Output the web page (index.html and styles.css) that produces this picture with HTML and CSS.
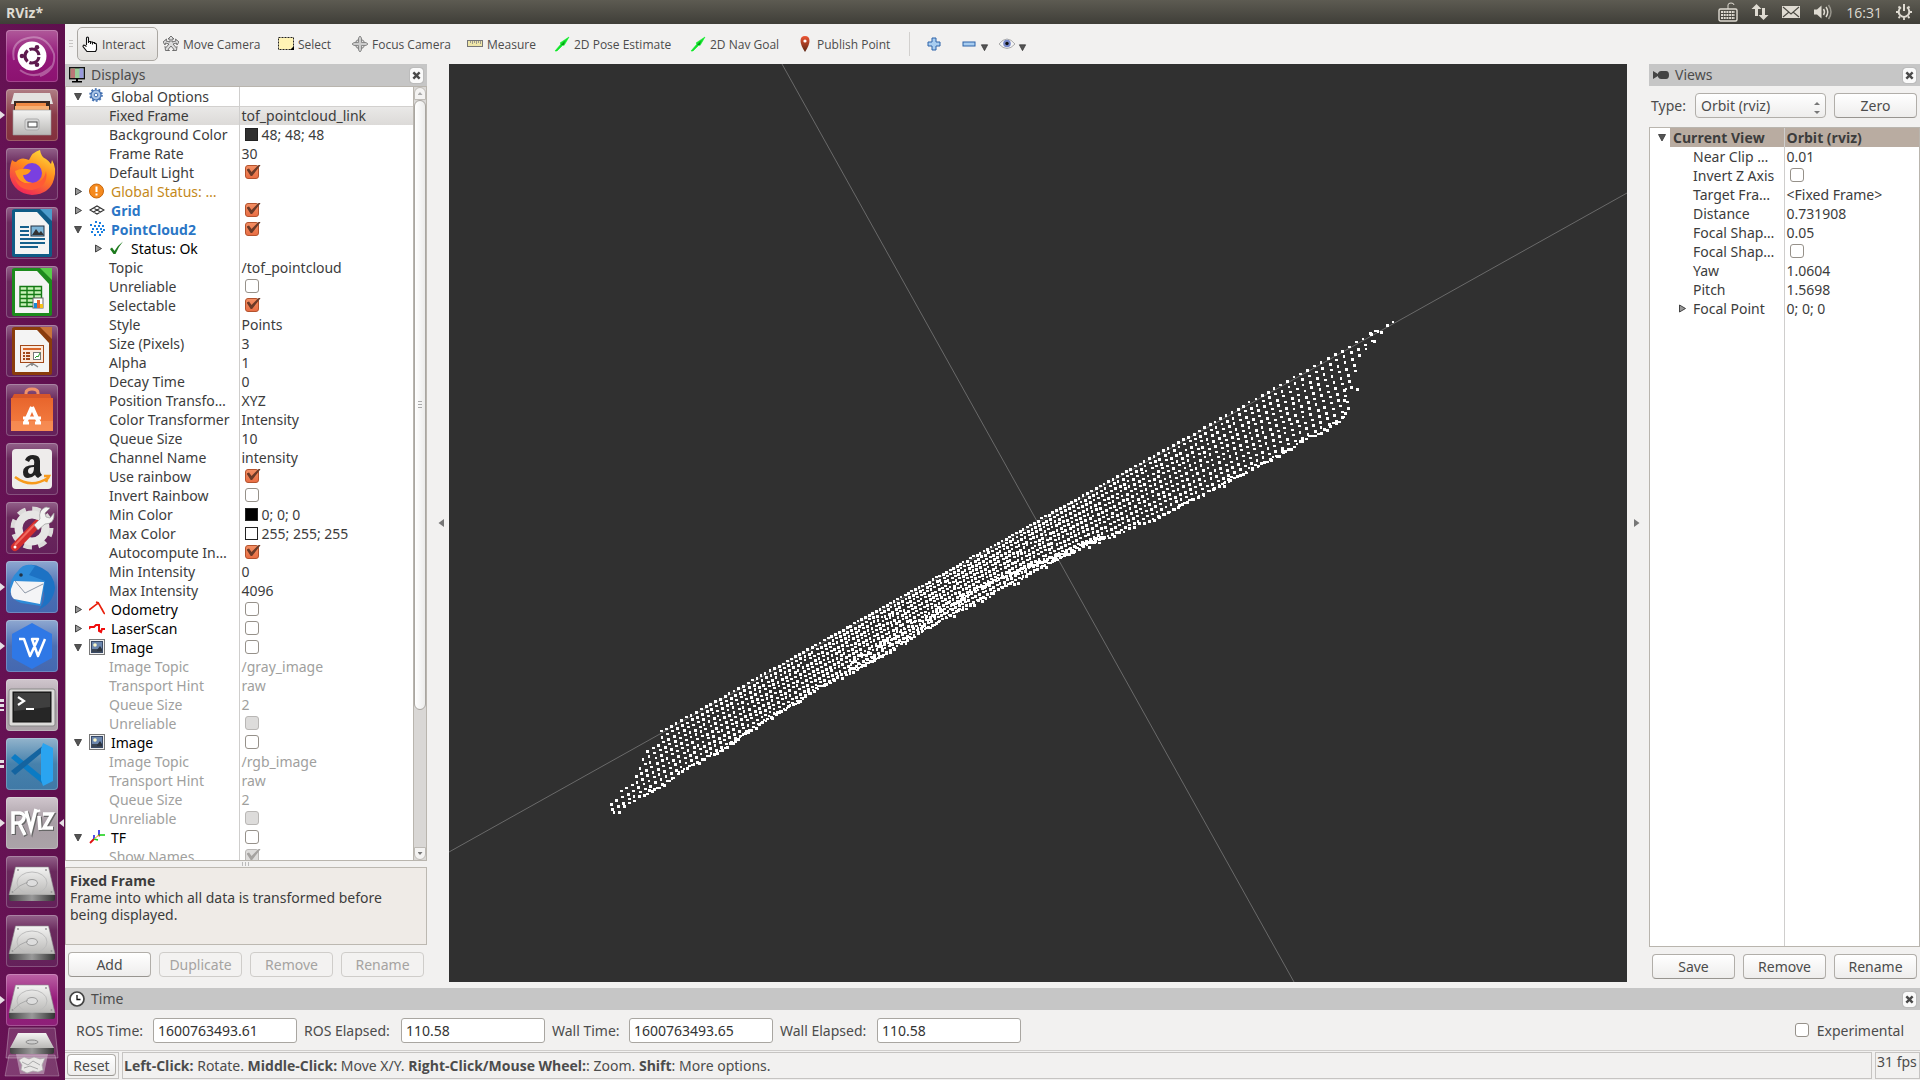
FILE: index.html
```html
<!DOCTYPE html>
<html lang="en">
<head>
<meta charset="utf-8">
<title>RViz*</title>
<link rel="stylesheet" href="styles.css">
</head>
<body>
<svg class="defs" aria-hidden="true">
  <defs>
    <linearGradient id="steel" x1="0" y1="0" x2="0" y2="1"><stop offset="0" stop-color="#f4f4f3"/><stop offset="1" stop-color="#b9b8b6"/></linearGradient>
    <linearGradient id="steelDark" x1="0" y1="0" x2="1" y2="0"><stop offset="0" stop-color="#444"/><stop offset=".5" stop-color="#999"/><stop offset="1" stop-color="#333"/></linearGradient>
    <linearGradient id="fire" x1=".8" y1="0" x2=".3" y2="1"><stop offset="0" stop-color="#ffe13c"/><stop offset=".45" stop-color="#ff8a1e"/><stop offset="1" stop-color="#f0225b"/></linearGradient>
    <linearGradient id="bag" x1="0" y1="0" x2="0" y2="1"><stop offset="0" stop-color="#e8652c"/><stop offset="1" stop-color="#f58044"/></linearGradient>
    <linearGradient id="pin" x1="0" y1="0" x2="0" y2="1"><stop offset="0" stop-color="#ee5533"/><stop offset="1" stop-color="#5a2412"/></linearGradient>
    <symbol id="down" viewBox="0 0 10 10"><path d="M1.500 2h7L5 8.500z" fill="#555" stroke="#333" stroke-width=".8"/></symbol>
    <symbol id="right" viewBox="0 0 10 10"><path d="M2.500 1.500v7L8.500 5z" fill="#999" stroke="#333" stroke-width=".9"/></symbol>
    <symbol id="cross" viewBox="0 0 14 14"><path d="M4.500 4.500l5 5M9.500 4.500l-5 5" stroke="#4a4a4a" stroke-width="2.600" stroke-linecap="square"/></symbol>
    <symbol id="picture" viewBox="0 0 16 16"><rect x=".5" y=".5" width="15" height="15" fill="#eee" stroke="#777"/><rect x="2.500" y="2.500" width="11" height="11" fill="#6b86ad" stroke="#394a66"/><path d="M3 10h10v3H3z" fill="#3a4452"/><path d="M8 11l3-4 2 3v2H8z" fill="#2c3440"/><circle cx="6" cy="6" r="1.800" fill="#fbf7c8"/></symbol>
    <symbol id="drive" viewBox="0 2 52 52"><path d="M9.500 13h33L49 41H3z" fill="url(#steel)" stroke="#8a8a8a" stroke-width=".6"/><path d="M3 41h46v4q0 2-2 2H5q-2 0-2-2z" fill="url(#steelDark)"/><ellipse cx="26" cy="29" rx="15" ry="11" fill="none" stroke="#bdbdbd"/><ellipse cx="26" cy="29" rx="5.500" ry="3.500" fill="#ddd" stroke="#9c9c9c"/><path d="M8 37q5-6 14-9" fill="none" stroke="#aaa"/><circle cx="12" cy="16" r="1" fill="#999"/><circle cx="40" cy="16" r="1" fill="#999"/><circle cx="6.500" cy="38" r="1" fill="#999"/><circle cx="45.500" cy="38" r="1" fill="#999"/></symbol>
    <symbol id="goal" viewBox="0 0 16 16"><path d="M1 15l6-7-1-1 9-6-5 8.500-1-.5-6 6z" fill="#12e02a" stroke="#0ff02a" stroke-width=".6"/><path d="M7 9l4-4-1.500 4z" fill="#0a8a18"/></symbol>
  </defs>
</svg>

<header class="menubar">
  <strong class="app-name">RViz*</strong>
  <div class="indicators">
    <svg width="20" height="20" viewBox="0 0 20 20"><path d="M10 7V3q0-2 3-2t3 2" fill="none" stroke="#dfdbd2"/><rect x="1" y="7" width="18" height="12" rx="1.500" fill="none" stroke="#dfdbd2" stroke-width="1.400"/><path d="M3 10h14M3 13h14M3 16h14" stroke="#dfdbd2" stroke-width="2" stroke-dasharray="2 .7"/></svg>
    <svg width="18" height="18" viewBox="0 0 18 18"><path d="M5.500 1l5 5H7v7H4V6H.500zM12.500 17l-5-5H11V5h3v7h3.500z" fill="#dfdbd2"/></svg>
    <svg width="18" height="18" viewBox="0 0 18 18"><rect y="3" width="18" height="12" fill="#dfdbd2"/><path d="M1 4l8 7 8-7M1 14l6-5M17 14l-6-5" fill="none" stroke="#4a4942" stroke-width="1.100"/></svg>
    <svg width="20" height="18" viewBox="0 0 20 18"><path d="M1 6.500h3l4.500-4v13L4 11.500H1z" fill="#dfdbd2"/><path d="M10.500 6q2 3 0 6M13 4q3.500 5 0 10" fill="none" stroke="#dfdbd2" stroke-width="1.500"/><path d="M15.500 2q5 7 0 14" fill="none" stroke="#97958c" stroke-width="1.500"/></svg>
    <time>16:31</time>
    <svg width="18" height="18" viewBox="0 0 18 18"><path d="M6 4.300a5.300 5.300 0 1 0 6 0" fill="none" stroke="#dfdbd2" stroke-width="2"/><path d="M9 1v7" stroke="#dfdbd2" stroke-width="2"/><path d="M3.500 3.500l1.500 1.500M14.500 3.500L13 5M1 9h2.500M14.500 9H17M3.500 15l1.500-1.500M14.500 15L13 13.500M9 14.500V17" stroke="#dfdbd2" stroke-width="1.800"/></svg>
  </div>
</header>

<div class="desktop">
  <nav class="launcher" aria-label="Launcher">
    <button class="tile dash" aria-label="Search"><svg viewBox="0 0 52 52"><path d="M8 30Q4 12 22 8t26 16q2 16-14 22M14 40q16 12 32-4" fill="none" stroke="#fff" stroke-opacity=".3" stroke-width="2"/><circle cx="26" cy="26" r="14.500" fill="#fff"/><circle cx="26" cy="26" r="7" fill="none" stroke="#5e1a4e" stroke-width="3.200" stroke-dasharray="12.600 2" stroke-dashoffset="-1"/><circle cx="16" cy="26" r="2.300" fill="#5e1a4e"/><circle cx="31" cy="17.300" r="2.300" fill="#5e1a4e"/><circle cx="31" cy="34.700" r="2.300" fill="#5e1a4e"/></svg></button>
    <button class="tile files on" aria-label="Files"><svg viewBox="0 0 52 52"><path d="M8 4h36l3 11H5z" fill="#e3e2e1"/><path d="M8 12h36v10H8z" fill="#3c2a22"/><path d="M10 14h30v3H10z" fill="#ef8a45"/><path d="M9 17h34v5H9z" fill="#f7b074"/><path d="M7 21h38v25H7z" fill="url(#steel)" stroke="#999" stroke-width=".6"/><rect x="19" y="30" width="14" height="11" rx="2" fill="#d8d8d8" stroke="#aaa"/><rect x="22" y="33" width="9" height="5" fill="#fff" stroke="#444"/></svg></button>
    <button class="tile" aria-label="Firefox"><svg viewBox="0 0 52 52"><path d="M6 12q2 2 4 2 5-6 13-2 3-8 11-10 1 7 6 9 3 2 5 5l1-4q5 8 2 19Q44 46 26 47 8 45 4 29 3 20 6 12z" fill="url(#fire)"/><circle cx="26" cy="25" r="10" fill="#7a3fe0"/><path d="M9 23q8-4 16-1-2 5-8 5 1 7 10 8-14 3-18-12z" fill="#ff9a1f"/><path d="M27 35q11 0 13-12 3 16-14 19-14 0-17-12 6 7 18 5z" fill="#ff5a35"/></svg></button>
    <button class="tile" aria-label="Writer"><svg viewBox="0 0 52 52"><path d="M9 2h26l11 12v34q0 2-2 2H8q-2 0-2-2V4q0-2 3-2z" fill="#0f5b86"/><path d="M34 2h12v12z" fill="#4b9ccb"/><path d="M9 5h22l12 13v29H9z" fill="#f4f4f4"/><path d="M14 20h9M14 24h9M14 28h9M14 32h25M14 36h25M14 40h18" stroke="#15608c" stroke-width="2"/><rect x="25" y="19" width="13" height="10" fill="#7db5d8" stroke="#234"/><path d="M26 28l4-6 3 4 2-2 3 4z" fill="#333"/></svg></button>
    <button class="tile" aria-label="Calc"><svg viewBox="0 0 52 52"><path d="M9 2h26l11 12v34q0 2-2 2H8q-2 0-2-2V4q0-2 3-2z" fill="#1c8a1c"/><path d="M34 2h12v12z" fill="#58cc4a"/><path d="M9 5h22l12 13v29H9z" fill="#f4f4f4"/><path d="M14 20.500h21.500v20H14z" fill="#c8f2b8" stroke="#157a15" stroke-width="1.400"/><path d="M14 24.500h21M14 28.500h21M14 32.500h21M14 36.500h21M21 20v20M28 20v20" stroke="#157a15" stroke-width="1.400"/><rect x="27" y="32" width="10" height="10" fill="#fff" stroke="#666"/><path d="M28 37h3v5h-3z" fill="#1a8ad8"/><path d="M31 34h3v8h-3z" fill="#e8672a"/><path d="M34 38h3v4h-3z" fill="#f5c21a"/></svg></button>
    <button class="tile" aria-label="Impress"><svg viewBox="0 0 52 52"><path d="M9 2h26l11 12v34q0 2-2 2H8q-2 0-2-2V4q0-2 3-2z" fill="#8a3c0c"/><path d="M34 2h12v12z" fill="#c9753a"/><path d="M9 5h22l12 13v29H9z" fill="#f4f4f4"/><rect x="14.500" y="20.500" width="23" height="17" fill="#fbe9dc" stroke="#a3491a"/><path d="M17 24h18" stroke="#d9662a" stroke-width="2"/><path d="M17 28h7M17 31h7M17 34h7" stroke="#a3491a" stroke-width="2" stroke-dasharray="2 1 6"/><rect x="27.500" y="27.500" width="7" height="7" fill="#fff" stroke="#777"/><path d="M29 33l2-2 1 1 2-4" stroke="#2a9a2a" fill="none"/><path d="M26 38l-6 4M26 38l6 4M26 38v3" stroke="#888" stroke-width="1.500"/></svg></button>
    <button class="tile" aria-label="Software"><svg viewBox="0 0 52 52"><path d="M20 14V9q0-4 6-4t6 4v5" fill="none" stroke="#f0926a" stroke-width="3"/><path d="M8 10h36l2 6H5z" fill="#d6562a"/><path d="M5 14h42v33H5z" fill="url(#bag)"/><path d="M5 37h42v10H5z" fill="#fa9a63" opacity=".5"/><path d="M26 23l-7 16M26 23l7 16" stroke="#fff" stroke-width="4"/><path d="M17 34h18M17 39h6M29 39h6" stroke="#fff" stroke-width="3"/></svg></button>
    <button class="tile" aria-label="Amazon"><svg viewBox="0 0 52 52"><rect x="6" y="6" width="40" height="40" rx="4" fill="#eeeceb"/><path d="M19 17q2-5 8-5 7 0 7 6v10q0 2 2 4l-4 3q-2-1-3-3-3 3-7 3-5 0-5-6 0-7 11-7 1-6-2-6-2 0-3 3zM28 24q-6 0-6 4 0 3 3 3 3-1 3-7z" fill="#222"/><path d="M9 34q16 12 33 1l1-2-5 0M42 34l-2 5" fill="none" stroke="#f79a1c" stroke-width="2.600"/></svg></button>
    <button class="tile" aria-label="System Settings"><svg viewBox="0 0 52 52"><circle cx="26" cy="26" r="17" fill="none" stroke="#dcdbda" stroke-width="9" stroke-dasharray="7.500 5.800"/><circle cx="26" cy="26" r="13.500" fill="none" stroke="#e6e5e4" stroke-width="8"/><path d="M9 45l22-23" stroke="#d42e2e" stroke-width="8" stroke-linecap="round"/><path d="M9 43l20-21" stroke="#f06a5f" stroke-width="2"/><path d="M28 23l6-6q-2-9 6-12l4 1-5 5 1 4 4 1 4-5q1 11-9 11l-7 6z" fill="#f3f3f2" stroke="#999" stroke-width=".7"/><circle cx="9" cy="45" r="1.500" fill="#fff"/></svg></button>
    <button class="tile blue on" aria-label="Thunderbird"><svg viewBox="0 0 52 52"><path d="M10 14Q20-2 36 7q12 6 13 20-2 16-17 22 8-7 6-18L14 18z" fill="#1d72c4"/><path d="M4 30Q3 18 12 10q6-9 17-5l-6 9 16 6-4 25-20-3q-9-3-11-12z" fill="#2e8bd8"/><path d="M8 20l30 1-4 22-26-5q-4-3-3-10z" fill="#f4f4f6"/><path d="M9 20l10 12 18-9" fill="none" stroke="#8e98a8"/><circle cx="15" cy="14" r="1.800" fill="#234"/></svg></button>
    <button class="tile blue on" aria-label="WPS Writer"><svg viewBox="0 0 52 52"><path d="M26 3l20 11v24L26 49 6 38V14z" fill="#2f78e6"/><path d="M13 19h5l6 17 8-17h-6l6 17 7-17" fill="none" stroke="#fff" stroke-width="2.500" stroke-linejoin="round"/></svg></button>
    <button class="tile silver on3" aria-label="Terminal"><svg viewBox="0 0 52 52"><rect x="3" y="10" width="46" height="37" rx="2" fill="#dcdbd9" stroke="#888"/><rect x="7" y="13" width="38" height="30" fill="#262626" stroke="#111"/><path d="M8 14h36v14L8 32z" fill="#3f3f3f"/><path d="M12 18l6 4-6 4" fill="none" stroke="#fff" stroke-width="2.200"/><path d="M20 30h8" stroke="#fff" stroke-width="2"/></svg></button>
    <button class="tile sky on2" aria-label="Visual Studio Code"><svg viewBox="0 0 52 52"><path d="M5 20l4-4 29 24v7z" fill="#0b7bc4"/><path d="M5 33l4 4 30-25V6z" fill="#1464a0"/><path d="M37 5l10 5v33l-10 5-2-6V11z" fill="#2aa4f0"/></svg></button>
    <button class="tile silver on active" aria-label="RViz"><svg viewBox="0 0 52 52"><path d="M7 37V16h7q5 1 4 5t-5 5l6 12M7 26h6M20 14l5 18 5-20M33 19l1 14M37 17h9L38 31h9" fill="none" stroke="#666" stroke-width="4" transform="translate(1 1)"/><path d="M7 37V16h7q5 1 4 5t-5 5l6 12M7 26h6M20 14l5 18 5-20M33 19l1 14M37 17h9L38 31h9M32 13l1 2" fill="none" stroke="#fff" stroke-width="3.500"/></svg></button>
    <button class="tile" aria-label="Drive"><svg><use href="#drive"/></svg></button>
    <button class="tile" aria-label="Drive"><svg><use href="#drive"/></svg></button>
    <button class="tile magenta on" aria-label="Drive"><svg><use href="#drive"/></svg></button>
    <button class="folded" aria-label="Trash"><svg width="56" height="50" viewBox="0 0 56 50"><path d="M5 1h46l3 30H2z" fill="#fff" fill-opacity=".15" stroke="#fff" stroke-opacity=".3"/><path d="M14 6h28l8 15H6z" fill="url(#steel)"/><path d="M6 21h44v4q0 2-2 2H8q-2 0-2-2z" fill="url(#steelDark)"/><ellipse cx="28" cy="15" rx="6" ry="2" fill="#ccc" stroke="#888"/><path d="M5 28h46l4 21H1z" fill="#fff" fill-opacity=".18" stroke="#fff" stroke-opacity=".25"/><path d="M12 27h32l-4 20H16z" fill="#e0d5de" fill-opacity=".45"/><path d="M15 33l5-3 5 2 5-2 6 2 5-1-3 7 1 5-5 2-5-1-6 2-6-3 1-5z" fill="#e9e7e6" stroke="#aaa" stroke-width=".7"/><path d="M18 35l6 3 5-4 7 4M20 41l6-2 8 3" fill="none" stroke="#aaa"/></svg></button>
  </nav>

  <div class="window">
    <div class="toolbar" role="toolbar">
      <span class="grip"></span>
      <button class="tool w-interact pressed"><svg viewBox="0 0 16 16"><path d="M4.500 9V2q0-1 1-1t1 1v5V5.500h2V8 6h2v2.500V6.500h2V8q0-1 1.500-.5.500.500.500 2v4l-1 2H5l-4-5q0-2 2-1l1.500 1" fill="#fff" stroke="#111" stroke-width="1.100"/></svg>Interact</button>
      <button class="tool w-move"><svg viewBox="0 0 16 16"><path d="M8 0l3 3-2 0v3l4-1-.5-2L16 6l-2 3-.5-2L10 8l3 3.500 1-1-.5 4-4 0 1.500-1L8 10l-3 3.500L6.500 14.500l-4 0L2 10.500l1 1L6 8 2.500 7 2 9 0 6l3.500-3L3 5l4 1V3L5 3z" fill="#ddd" stroke="#555" stroke-width=".8"/></svg>Move Camera</button>
      <button class="tool w-select"><svg viewBox="0 0 16 16"><rect x=".5" y="1.500" width="15" height="12" fill="#fff3b5" stroke="#222" stroke-dasharray="2 1"/><path d="M12 14h4v-4z"/></svg>Select</button>
      <button class="tool w-move"><svg viewBox="0 0 16 16"><circle cx="8" cy="8" r="4.500" fill="none" stroke="#999" stroke-width="1.500"/><path d="M8 0l1.500 2v4.500H14L16 8l-2 1.500H9.500V14L8 16l-1.500-2V9.500H2L0 8l2-1.500h4.500V2z" fill="#ccc" stroke="#777" stroke-width=".8"/></svg>Focus Camera</button>
      <button class="tool w-measure"><svg viewBox="0 0 16 16"><rect x=".5" y="4.500" width="15" height="6" fill="#efe6a8" stroke="#777"/><path d="M3.500 5v2M5.500 5v3M7.500 5v2M9.500 5v3M11.500 5v2M13.500 5v3" stroke="#888" stroke-width=".8"/></svg>Measure</button>
      <button class="tool w-pose"><svg><use href="#goal"/></svg>2D Pose Estimate</button>
      <button class="tool w-nav"><svg><use href="#goal"/></svg>2D Nav Goal</button>
      <button class="tool w-publish"><svg viewBox="0 0 16 16"><path d="M8 0q4.500 0 4.500 5 0 4-4.500 11Q3.500 9 3.500 5 3.500 0 8 0z" fill="url(#pin)"/><circle cx="8" cy="5" r="1.600" fill="#fff"/></svg>Publish Point</button>
      <span class="sep"></span>
      <button class="tool mini" aria-label="Add tool"><svg viewBox="0 0 16 16"><path d="M6 2h4v4h4v4h-4v4H6v-4H2V6h4z" fill="#a8cdf0" stroke="#2d62a8"/></svg></button>
      <button class="tool mini" aria-label="Remove tool"><svg viewBox="0 0 16 16"><rect x="2" y="6" width="12" height="4" fill="#a8cdf0" stroke="#2d62a8"/></svg><svg class="caret"><use href="#down"/></svg></button>
      <button class="tool mini" aria-label="View options"><svg viewBox="0 0 16 16"><path d="M0 8q8-10 16 0-8 9-16 0z" fill="#f4f4f4" stroke="#aaa"/><circle cx="8" cy="7.500" r="3.800" fill="#7788c8"/><circle cx="8" cy="7.500" r="1.700" fill="#111"/></svg><svg class="caret"><use href="#down"/></svg></button>
    </div>

    <div class="docks">
      <section class="displays">
        <h2 class="dock-title"><svg viewBox="0 0 16 16"><rect x=".7" y=".7" width="14.600" height="11" fill="#9c9" stroke="#111" stroke-width="1.400"/><path d="M1.500 1.500H6V11H1.500z" fill="#b77"/><path d="M10.500 1.500h4V11h-4z" fill="#99d"/><path d="M7 12h2v2h4v1.500H3V14h4z"/></svg>Displays<button class="close" aria-label="Close"><svg><use href="#cross"/></svg></button></h2>
        <div class="tree-box">
          <div class="tree-clip">
          <table class="tree">
            <colgroup><col class="name-col"><col></colgroup>
            <tbody>
            <tr class="top"><td><i class="tw"><svg><use href="#down"/></svg></i><svg class="ico" viewBox="0 0 16 16"><circle cx="7" cy="7" r="5" fill="#a9c4e6" stroke="#3f6eb0" stroke-width="1.200"/><circle cx="7" cy="7" r="6" fill="none" stroke="#3f6eb0" stroke-width="1.600" stroke-dasharray="1.900 1.870"/><circle cx="7" cy="7" r="1.800" fill="#fff" stroke="#3f6eb0"/></svg>Global Options</td><td></td></tr>
            <tr class="picked"><td>Fixed Frame</td><td>tof_pointcloud_link</td></tr>
            <tr><td>Background Color</td><td><i class="swatch dark"></i>48; 48; 48</td></tr>
            <tr><td>Frame Rate</td><td>30</td></tr>
            <tr><td>Default Light</td><td><input type="checkbox" aria-label="Default Light" checked></td></tr>
            <tr class="top warn"><td><i class="tw"><svg><use href="#right"/></svg></i><svg class="ico" viewBox="0 0 16 16"><circle cx="7.500" cy="8" r="7" fill="#f58a1e" stroke="#c8660a"/><path d="M7.500 3.500V9M7.500 10.500v2" stroke="#fff" stroke-width="2"/></svg>Global Status: …</td><td></td></tr>
            <tr class="top live"><td><i class="tw"><svg><use href="#right"/></svg></i><svg class="ico" viewBox="0 0 16 16"><path d="M1 8l7-4 7 4-7 4zM4.500 6l7 4M11.500 6l-7 4" fill="none" stroke="#333" stroke-width="1.100"/></svg>Grid</td><td><input type="checkbox" aria-label="Grid" checked></td></tr>
            <tr class="top live"><td><i class="tw"><svg><use href="#down"/></svg></i><svg class="ico" viewBox="0 0 16 16"><path d="M6 1h2M10 2h2M1 4h2M5 5h2M9 5h2M13 5h2M3 8h2M7 8h2M11 8h2M2 11h2M8 11h2M12 11h2M14 9h2M5 14h2M10 14h2" stroke="#1a7fe0" stroke-width="1.800"/></svg>PointCloud2</td><td><input type="checkbox" aria-label="PointCloud2" checked></td></tr>
            <tr class="sub"><td><i class="tw"><svg><use href="#right"/></svg></i><svg class="ico" viewBox="0 0 16 16"><path d="M1 9l2-1.500L5.500 11Q9 5 14 1.500q-4.500 5-7.500 12.500H4.500z" fill="#1d7a1d"/></svg>Status: Ok</td><td></td></tr>
            <tr><td>Topic</td><td>/tof_pointcloud</td></tr>
            <tr><td>Unreliable</td><td><input type="checkbox" aria-label="Unreliable"></td></tr>
            <tr><td>Selectable</td><td><input type="checkbox" aria-label="Selectable" checked></td></tr>
            <tr><td>Style</td><td>Points</td></tr>
            <tr><td>Size (Pixels)</td><td>3</td></tr>
            <tr><td>Alpha</td><td>1</td></tr>
            <tr><td>Decay Time</td><td>0</td></tr>
            <tr><td>Position Transfo…</td><td>XYZ</td></tr>
            <tr><td>Color Transformer</td><td>Intensity</td></tr>
            <tr><td>Queue Size</td><td>10</td></tr>
            <tr><td>Channel Name</td><td>intensity</td></tr>
            <tr><td>Use rainbow</td><td><input type="checkbox" aria-label="Use rainbow" checked></td></tr>
            <tr><td>Invert Rainbow</td><td><input type="checkbox" aria-label="Invert Rainbow"></td></tr>
            <tr><td>Min Color</td><td><i class="swatch black"></i>0; 0; 0</td></tr>
            <tr><td>Max Color</td><td><i class="swatch"></i>255; 255; 255</td></tr>
            <tr><td>Autocompute In…</td><td><input type="checkbox" aria-label="Autocompute Intensity Bounds" checked></td></tr>
            <tr><td>Min Intensity</td><td>0</td></tr>
            <tr><td>Max Intensity</td><td>4096</td></tr>
            <tr class="top off"><td><i class="tw"><svg><use href="#right"/></svg></i><svg class="ico" viewBox="0 0 16 16"><path d="M0 9l8-6 1-1 1 1 5 9M7 1l3 1M13 8l2 4 1 1" fill="none" stroke="#e8200c" stroke-width="1.600"/></svg>Odometry</td><td><input type="checkbox" aria-label="Odometry"></td></tr>
            <tr class="top off"><td><i class="tw"><svg><use href="#right"/></svg></i><svg class="ico" viewBox="0 0 16 16"><path d="M0 9l1-2h4l2-2h3v6l2 1 1-3h3" fill="none" stroke="#f00c0c" stroke-width="2"/></svg>LaserScan</td><td><input type="checkbox" aria-label="LaserScan"></td></tr>
            <tr class="top off"><td><i class="tw"><svg><use href="#down"/></svg></i><svg class="ico"><use href="#picture"/></svg>Image</td><td><input type="checkbox" aria-label="Image"></td></tr>
            <tr class="dim"><td>Image Topic</td><td>/gray_image</td></tr>
            <tr class="dim"><td>Transport Hint</td><td>raw</td></tr>
            <tr class="dim"><td>Queue Size</td><td>2</td></tr>
            <tr class="dim"><td>Unreliable</td><td><input type="checkbox" aria-label="Unreliable" disabled></td></tr>
            <tr class="top off"><td><i class="tw"><svg><use href="#down"/></svg></i><svg class="ico"><use href="#picture"/></svg>Image</td><td><input type="checkbox" aria-label="Image"></td></tr>
            <tr class="dim"><td>Image Topic</td><td>/rgb_image</td></tr>
            <tr class="dim"><td>Transport Hint</td><td>raw</td></tr>
            <tr class="dim"><td>Queue Size</td><td>2</td></tr>
            <tr class="dim"><td>Unreliable</td><td><input type="checkbox" aria-label="Unreliable" disabled></td></tr>
            <tr class="top off"><td><i class="tw"><svg><use href="#down"/></svg></i><svg class="ico" viewBox="0 0 16 16"><path d="M1 14l4-4M9 6l2 1" stroke="#e01010" stroke-width="1.800"/><path d="M5 10V6M10 6V1" stroke="#1515e0" stroke-width="1.500"/><path d="M5 10l4 1M10 6h6" stroke="#10d010" stroke-width="1.500"/><path d="M5 10l5-4" stroke="#d8a020"/></svg>TF</td><td><input type="checkbox" aria-label="TF"></td></tr>
            <tr class="dim"><td>Show Names</td><td><input type="checkbox" aria-label="Show Names" checked disabled></td></tr>
            </tbody>
          </table>
          </div>
          <div class="scroll"><span class="step up"></span><span class="thumb"></span><span class="rest"></span><span class="step dn"></span></div>
        </div>
        <div class="vsplit"><span></span></div>
        <div class="help"><b>Fixed Frame</b><p>Frame into which all data is transformed before being displayed.</p></div>
        <div class="actions"><button class="btn">Add</button><button class="btn" disabled>Duplicate</button><button class="btn" disabled>Remove</button><button class="btn" disabled>Rename</button></div>
      </section>

      <button class="fold fold-left" aria-label="Hide left panel"><svg viewBox="0 0 10 10"><path d="M8 1v8L2.500 5z" fill="#777"/></svg></button>
      <main class="view">
        <svg viewBox="0 0 1178 918" preserveAspectRatio="xMidYMid slice" role="img" aria-label="Point cloud">
          <path class="axis" d="M0 788L1178 129M333 0L845 918"/>
          <path id="cloud" class="points"/>
        </svg>
      </main>
      <button class="fold" aria-label="Hide right panel"><svg viewBox="0 0 10 10"><path d="M1 1v8l5.500-4z" fill="#777"/></svg></button>

      <section class="views">
        <h2 class="dock-title"><svg viewBox="0 0 16 16"><path d="M0 4l5 3V6q1-2 3-2h5q3 0 3 4t-3 4H8q-2 0-3-2V9l-5 3z" fill="#444"/></svg>Views<button class="close" aria-label="Close"><svg><use href="#cross"/></svg></button></h2>
        <div class="type-row"><label for="type">Type:</label><div class="combo"><select id="type"><option>Orbit (rviz)</option></select></div><button class="btn">Zero</button></div>
        <div class="tree-box view-tree">
          <table class="tree">
            <colgroup><col class="name-col"><col></colgroup>
            <tbody>
            <tr class="head"><td><i class="tw"><svg><use href="#down"/></svg></i>Current View</td><td>Orbit (rviz)</td></tr>
            <tr><td>Near Clip …</td><td>0.01</td></tr>
            <tr><td>Invert Z Axis</td><td><input type="checkbox" aria-label="Invert Z Axis"></td></tr>
            <tr><td>Target Fra…</td><td>&lt;Fixed Frame&gt;</td></tr>
            <tr><td>Distance</td><td>0.731908</td></tr>
            <tr><td>Focal Shap…</td><td>0.05</td></tr>
            <tr><td>Focal Shap…</td><td><input type="checkbox" aria-label="Focal Shape Fixed Size"></td></tr>
            <tr><td>Yaw</td><td>1.0604</td></tr>
            <tr><td>Pitch</td><td>1.5698</td></tr>
            <tr class="sub"><td><i class="tw"><svg><use href="#right"/></svg></i>Focal Point</td><td>0; 0; 0</td></tr>
            <tr class="fill"><td></td><td></td></tr>
            </tbody>
          </table>
        </div>
        <div class="actions"><button class="btn">Save</button><button class="btn">Remove</button><button class="btn">Rename</button></div>
      </section>
    </div>

    <section class="time">
      <h2 class="dock-title"><svg viewBox="0 0 16 16"><circle cx="8" cy="8" r="7" fill="#fff" stroke="#444" stroke-width="1.700"/><path d="M8 4v4.500h3.500" fill="none" stroke="#111" stroke-width="1.300"/></svg>Time<button class="close" aria-label="Close"><svg><use href="#cross"/></svg></button></h2>
      <div class="time-row">
        <label class="short" for="rt">ROS Time:</label><input id="rt" type="text" value="1600763493.61">
        <label class="long" for="re">ROS Elapsed:</label><input id="re" type="text" value="110.58">
        <label class="short" for="wt">Wall Time:</label><input id="wt" type="text" value="1600763493.65">
        <label class="long" for="we">Wall Elapsed:</label><input id="we" type="text" value="110.58">
        <label class="experimental"><input type="checkbox">Experimental</label>
      </div>
    </section>
    <footer class="status">
      <div class="cell"><button class="btn reset">Reset</button></div>
      <div class="cell hint"><p><b>Left-Click:</b> Rotate. <b>Middle-Click:</b> Move X/Y. <b>Right-Click/Mouse Wheel:</b>: Zoom. <b>Shift</b>: More options.</p></div>
      <div class="cell fps">31 fps</div>
    </footer>
  </div>
</div>
<script src="cloud.js"></script>
</body>
</html>
```
FILE: styles.css
```css
* { box-sizing: border-box; }
body {
  margin: 0;
  height: 100vh;
  display: flex;
  flex-direction: column;
  overflow: hidden;
  background: #f2f1f0;
  color: #4c4c4c;
  font: 14px/19px "Noto Sans", "Open Sans", sans-serif;
}
button, input, select { font: inherit; color: inherit; }
button { padding: 0; border: 0; background: none; }
h2, p { margin: 0; font-size: 14px; font-weight: 400; }
.defs { position: absolute; width: 0; height: 0; }

/* top bar */
.menubar {
  flex: 0 0 24px;
  display: flex;
  align-items: center;
  justify-content: space-between;
  padding: 0 7px 0 6px;
  color: #dfdbd2;
  background: linear-gradient(#5d5b52, #3f3e38);
  font-family: "Open Sans", sans-serif;
}
.indicators { display: flex; align-items: center; gap: 13px; }
.indicators svg { display: block; }

.desktop { flex: 1; min-height: 0; display: flex; }

/* launcher */
.launcher {
  flex: 0 0 65px;
  display: flex;
  flex-direction: column;
  align-items: center;
  gap: 7px;
  padding: 6px 1px 0 0;
  overflow: hidden;
  background: linear-gradient(90deg, #661254, #5e0f4d);
}
.tile {
  position: relative;
  flex: 0 0 52px;
  width: 52px;
  border-radius: 4px;
  background: linear-gradient(#93628a, #6a2a5d 30%, #64205a);
  box-shadow: inset 0 0 0 1px #ffffff38;
}
.tile svg { display: block; width: 52px; height: 52px; }
.dash { background: linear-gradient(#b05a9a, #93187a 50%, #8c1270); }
.files { background: linear-gradient(#b07f86, #8a3a48 50%, #83303c); }
.blue { background: linear-gradient(#8fa8d0, #4c6fb4 50%, #4468b0); }
.sky { background: linear-gradient(#93b4cc, #4681ac 50%, #4079a6); }
.silver { background: linear-gradient(#d0c6cd, #a79da4 50%, #aba3a8); }
.magenta { background: linear-gradient(#bb62a4, #94197a 50%, #8e2078); }
.on::before, .active::after {
  content: "";
  position: absolute;
  left: -6px;
  top: 22px;
  width: 5px;
  height: 8px;
  background: #e6dfe4;
  clip-path: polygon(0 0, 100% 50%, 0 100%);
}
.active::after { left: 53px; clip-path: polygon(100% 0, 0 50%, 100% 100%); }
.on3::before, .on2::before {
  content: "";
  position: absolute;
  left: -6px;
  top: 20px;
  width: 4px;
  height: 12px;
  background: repeating-linear-gradient(#e6dfe4 0 3px, transparent 3px 5px);
}
.on2::before { top: 22px; height: 8px; }
.folded { flex: 0 0 50px; margin-top: -6px; }
.folded svg { display: block; }

/* window */
.window { flex: 1; min-width: 0; display: flex; flex-direction: column; }
.toolbar {
  flex: 0 0 40px;
  display: flex;
  align-items: center;
  padding: 0 4px;
  font-family: "Open Sans", sans-serif;
  font-size: 12px;
}
.grip {
  width: 4px;
  height: 8px;
  margin-right: 4px;
  background: repeating-linear-gradient(#c8c6c4 0 1px, transparent 1px 3px);
}
.tool { display: flex; align-items: center; gap: 4px; height: 34px; padding: 0 5px; white-space: nowrap; }
.tool svg { width: 16px; height: 16px; }
.tool .caret { width: 9px; height: 9px; margin: 7px 0 0 -1px; }
.pressed {
  border: 1px solid #aaa7a2;
  padding: 0 4px;
  border-radius: 5px;
  background: linear-gradient(#f4f3f2, #e2e0dd);
}
.w-interact { width: 81px; }
.w-move { width: 115px; }
.w-select { width: 74px; }
.w-measure { width: 87px; }
.w-pose { width: 136px; }
.w-nav { width: 107px; }
.w-publish { width: 108px; }
.mini { min-width: 35px; }
.sep { width: 1px; height: 24px; margin: 0 11px 0 9px; background: #d2d0ce; }

.docks { flex: 1; min-height: 0; display: flex; margin-bottom: 6px; }
.displays { flex: 0 0 362px; display: flex; flex-direction: column; min-height: 0; }
.views { flex: 0 0 271px; display: flex; flex-direction: column; min-height: 0; }
.dock-title {
  flex: 0 0 22px;
  display: flex;
  align-items: center;
  gap: 6px;
  padding: 0 4px;
  line-height: 22px;
  background: #c6c6c6;
}
.dock-title > svg { width: 16px; height: 16px; }
.close {
  width: 13px;
  height: 15px;
  margin-left: auto;
  border-radius: 3px;
  background: #fafafa;
  box-shadow: 0 0 1px #666;
}
.close svg { display: block; width: 13px; height: 15px; }

.fold { flex: 0 0 22px; display: flex; align-items: center; justify-content: center; }
.fold-left { justify-content: flex-end; padding-right: 3px; }
.fold svg { width: 10px; height: 10px; }
.view { flex: 1; min-width: 0; background: #303030; }
.view svg { display: block; width: 100%; height: 100%; }
.axis { stroke: #6a6a6a; fill: none; }
.points { fill: #fff; shape-rendering: crispEdges; }

/* property trees */
.tree-box { flex: 1; min-height: 0; display: flex; border: 1px solid #b9b5ae; background: #fff; }
.displays .tree-box { border-right: 0; }
.tree-clip { flex: 1; min-width: 0; overflow: hidden; border-right: 1px solid #b9b5ae; }
.tree { width: 100%; table-layout: fixed; border-collapse: collapse; color: #3c3c3c; }
.name-col { width: 173px; }
.tree tr { height: 19px; }
.tree td { height: 19px; padding: 0; vertical-align: middle; white-space: nowrap; overflow: hidden; line-height: 19px; }
.tree td:first-child { padding-left: 43px; }
.tree td + td { border-left: 1px solid #cfcecd; padding-left: 2px; }
.tree .top td:first-child { padding-left: 4px; }
.tree .sub td:first-child { padding-left: 24px; color: #000; }
.tw { display: inline-block; width: 16px; padding: 0 3px; vertical-align: top; }
.tw svg { display: block; width: 10px; height: 19px; }
.ico { width: 16px; height: 16px; margin: 1px 6px 0 3px; vertical-align: top; }
.picked { background: linear-gradient(#eae9e8, #dcdad8); box-shadow: inset 0 1px #d2d0ce; }
.warn { color: #c4891a; }
.live td:first-child { color: #2a76c6; font-weight: 700; font-family: "Open Sans", sans-serif; }
.off { color: #000; }
.tree .dim { color: #a09f9e; }
.swatch {
  display: inline-block;
  width: 13px;
  height: 13px;
  margin: 3px 4px 0 3px;
  vertical-align: top;
  border: 1px solid #222;
  background: #fff;
}
.dark { background: #303030; }
.black { background: #000; }

input[type="checkbox"] {
  appearance: none;
  position: relative;
  display: block;
  width: 14px;
  height: 14px;
  margin: 0 0 2px 3px;
  border: 1px solid #96918a;
  border-radius: 3px;
  background: #fff;
}
input[type="checkbox"]:checked { background: linear-gradient(#f38e63, #e96f45); border-color: #b4532e; }
input[type="checkbox"]:disabled { background: #dddcdb; border-color: #b9b7b5; }
input[type="checkbox"]:checked::after {
  content: "";
  position: absolute;
  left: 1px;
  top: -1px;
  width: 14px;
  height: 12px;
  background: #6b3a28;
  clip-path: polygon(0 42%, 18% 34%, 36% 62%, 90% 0, 100% 6%, 40% 96%, 30% 96%);
}
input[type="checkbox"]:disabled::after { background: #a5a3a1; }

.view-tree .tree { height: 100%; }
.view-tree .name-col { width: 134px; }
.view-tree .fill, .view-tree .fill td { height: auto; }
.head { background: #b9aca1; font-weight: 700; font-family: "Open Sans", sans-serif; }
.tree .head td:first-child { padding-left: 0; }
.view-tree .sub td:first-child { color: inherit; }
.view-tree .tw { margin-right: 3px; }
.head .tw { width: 20px; padding-left: 7px; background: #fff; }

/* scroll bar of the displays tree */
.scroll { flex: 0 0 13px; display: flex; flex-direction: column; background: #d9d7d5; border-right: 1px solid #b9b5ae; }
.step { flex: 0 0 13px; display: flex; align-items: center; justify-content: center; background: #f4f3f2; border: 1px solid #bdbab5; }
.step::before { content: ""; width: 5px; height: 3px; background: #777; }
.up { border-radius: 6px 6px 0 0; }
.up::before { background: #aaa; clip-path: polygon(50% 0, 100% 100%, 0 100%); }
.dn { border-radius: 0 0 6px 6px; }
.dn::before { clip-path: polygon(0 0, 100% 0, 50% 100%); }
.thumb {
  flex: 610;
  display: flex;
  align-items: center;
  justify-content: center;
  border: 1px solid #a9a6a1;
  border-radius: 6px;
  background: linear-gradient(90deg, #fff, #ececeb);
}
.thumb::before { content: ""; width: 4px; height: 8px; background: repeating-linear-gradient(#aaa 0 1px, transparent 1px 3px); }
.rest { flex: 137; }

.vsplit { flex: 0 0 6px; display: flex; align-items: center; justify-content: center; }
.vsplit span { width: 8px; height: 4px; background: repeating-linear-gradient(90deg, #bbb 0 1px, transparent 1px 3px); }
.help {
  flex: 0 0 78px;
  padding: 4px;
  border: 1px solid #bcb8b1;
  background: #efebe7;
  color: #3c3c3c;
  line-height: 17px;
}
.help b, .hint b { font-family: "Open Sans", sans-serif; }
.actions { display: flex; gap: 8px; padding: 7px 3px 5px; }
.views .actions { padding-bottom: 3px; }
.btn {
  flex: 0 0 83px;
  height: 25px;
  border: 1px solid #b1aea9;
  border-bottom-color: #989590;
  border-radius: 4px;
  background: linear-gradient(#fff, #eeedec);
}
.btn:disabled { color: #a5a3a1; border-color: #cfcdca; background: #f3f2f1; }
.type-row { display: flex; align-items: center; gap: 8px; padding: 7px 3px 9px 2px; }
.type-row label { flex: 1; }
.combo { position: relative; flex: 0 0 131px; }
.combo select {
  display: block;
  appearance: none;
  width: 100%;
  height: 25px;
  padding: 0 5px;
  border: 1px solid #b1aea9;
  border-radius: 4px;
  background: linear-gradient(#fff, #eeedec);
}
.combo::before, .combo::after { content: ""; position: absolute; right: 6px; width: 6px; height: 3px; background: #777; }
.combo::before { top: 9px; clip-path: polygon(50% 0, 100% 100%, 0 100%); }
.combo::after { top: 18px; clip-path: polygon(0 0, 100% 0, 50% 100%); }

/* time panel and status bar */
.time { border-bottom: 1px solid #cfcdcb; }
.time-row { display: flex; align-items: center; gap: 7px; height: 40px; padding: 0 16px 0 11px; white-space: nowrap; }
.short { flex: 0 0 70px; }
.long { flex: 0 0 90px; }
.time-row input[type="text"] {
  flex: 0 0 144px;
  width: 144px;
  height: 25px;
  padding: 0 4px;
  border: 1px solid #a9a6a1;
  border-radius: 3px;
  background: #fff;
  color: #333;
}
.experimental { display: flex; align-items: center; gap: 8px; margin-left: auto; }
.experimental input { margin: 0; }
.status { flex: 0 0 28px; display: flex; gap: 3px; padding: 1px 0; }
.cell { border: 1px solid #c6c4c2; }
.status .cell:first-child { width: 54px; padding: 1px 2px; border-left: 0; }
.status .reset { width: 49px; height: 22px; line-height: 19px; }
.hint { flex: 1; min-width: 0; padding: 3px 1px; white-space: nowrap; }
.fps { width: 45px; padding-left: 1px; line-height: 17px; white-space: nowrap; }
```
FILE: cloud.js
```javascript
// Deterministic time-of-flight sheet, drawn as small squares in view coordinates.
(function () {
  var seed = 7;
  function rnd() {
    seed = (seed * 1103515245 + 12345) % 2147483648;
    return seed / 2147483648;
  }
  var outline = [
    [214, 663], [936, 259], [929, 274], [916, 288], [908, 302], [905, 318], [897, 326],
    [900, 336], [901, 344], [891, 358], [864, 373], [818, 399], [784, 418], [751, 433],
    [711, 453], [684, 464], [658, 473], [624, 489], [584, 511], [544, 530],
    [521, 541], [478, 566], [451, 581], [416, 603], [381, 618], [341, 643],
    [294, 673], [268, 691], [248, 700], [234, 709], [212, 723], [194, 733],
    [178, 740], [163, 752], [160, 742], [176, 722], [190, 704], [197, 688], [210, 676]
  ];
  function inside(x, y) {
    var hit = false;
    for (var i = 0, j = outline.length - 1; i < outline.length; j = i++) {
      var a = outline[i], b = outline[j];
      if ((a[1] > y) !== (b[1] > y) && x < (b[0] - a[0]) * (y - a[1]) / (b[1] - a[1]) + a[0]) hit = !hit;
    }
    return hit;
  }
  function along(table, x) {
    for (var i = 1; i < table.length; i++) {
      if (x <= table[i][0]) {
        var a = table[i - 1], b = table[i];
        return a[1] + (b[1] - a[1]) * (x - a[0]) / (b[0] - a[0]);
      }
    }
    return table[table.length - 1][1];
  }
  var stepX = [[100, 6], [230, 5], [300, 4.5], [400, 3.7], [500, 3.4], [600, 3.7], [650, 4.2], [750, 5.3], [850, 6.8], [950, 7.5]];
  var stepY = [[100, 6], [230, 5], [300, 4.6], [400, 4.2], [500, 3.9], [600, 4.3], [650, 4.8], [750, 5.3], [850, 5.7], [950, 6.5]];
  var d = "";
  function dot(x, y) {
    var w = rnd() < 0.75 ? 3 : 2, h = rnd() < 0.6 ? 3 : 2;
    d += "M" + Math.round(x - 1) + " " + Math.round(y - 1) + "h" + w + "v" + h + "h-" + w + "z";
  }
  for (var x = 100; x < 936; x += along(stepX, x)) {
    var top = 786 - 0.5594 * x, dy = along(stepY, x);
    for (var k = 0; k < 30; k++) {
      var px = x + k * dy * 0.25 + (rnd() - 0.5) * 0.6;
      var py = top + k * dy + (rnd() - 0.5) * 0.6;
      if (inside(px, py + (k === 0 ? 4 : 0))) dot(px, py);
    }
  }
  // Folded edges, where returns pile up.
  function streak(line, spacing, spread) {
    for (var x = line[0][0]; x < line[line.length - 1][0]; x += spacing) {
      dot(x, along(line, x) + (rnd() - 0.5) * spread);
    }
  }
  streak([[165, 749], [212, 721], [248, 699], [268, 689]], 5, 4);
  streak([[268, 689], [294, 671], [341, 641], [381, 617]], 2.6, 4);
  streak([[381, 617], [416, 601], [451, 580], [478, 565], [544, 529], [624, 488]], 4, 5);
  streak([[401, 601], [451, 573], [486, 550], [521, 530]], 2, 12);
  streak([[521, 528], [551, 514], [601, 494], [656, 472]], 1.8, 3);
  streak([[620, 490], [658, 474], [711, 452], [751, 432], [784, 416]], 5, 3);
  streak([[770, 420], [818, 397], [864, 372], [891, 357], [901, 343]], 3, 4);
  [[944, 258], [938, 261], [921, 269], [926, 267], [932, 268], [925, 277], [917, 285], [908, 325], [902, 323], [897, 325], [895, 336]].forEach(function (p) {
    dot(p[0], p[1]);
  });
  document.getElementById("cloud").setAttribute("d", d);
})();
```
